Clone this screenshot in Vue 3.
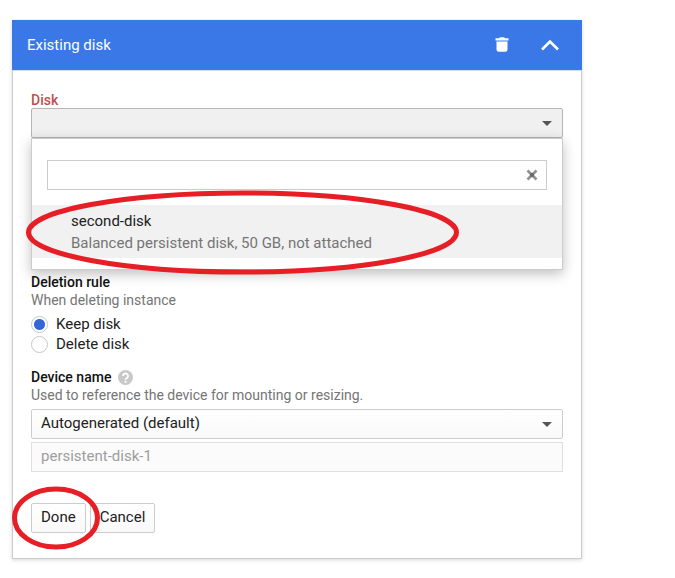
<script setup>
import { ref } from 'vue'

const disk = ref('')
const query = ref('')
const rule = ref('keep')
const naming = ref('auto')
const customName = ref('persistent-disk-1')

const disks = [
  { name: 'second-disk', detail: 'Balanced persistent disk, 50 GB, not attached' },
]
const rules = [
  { value: 'keep', label: 'Keep disk' },
  { value: 'delete', label: 'Delete disk' },
]
</script>

<template>
  <main class="page">
    <form class="card" @submit.prevent>
      <header class="head">
        <h1 class="title">Existing disk</h1>
        <button class="icon-btn" type="button" aria-label="Remove disk">
          <svg width="14" height="16" viewBox="0 0 14 16" fill="#fff">
            <path d="M0.5 1.2h3.500l0.900-1h4.200l0.900 1h3.500v2.300h-13z" />
            <path d="M1.500 4.500h11v8a2.200 2.200 0 0 1-2.200 2.200h-6.600a2.200 2.200 0 0 1-2.200-2.200z" />
          </svg>
        </button>
        <button class="icon-btn" type="button" aria-label="Collapse">
          <svg width="20" height="14" viewBox="0 0 20 14" fill="none" stroke="#fff" stroke-width="2.5">
            <path d="M2 11.5L10 3.500L18 11.500" />
          </svg>
        </button>
      </header>

      <div class="body">
        <section class="field disk-field">
          <label class="label error" for="disk">Disk</label>
          <div class="select-wrap">
            <select id="disk" v-model="disk" class="control open">
              <option value=""></option>
              <option v-for="d in disks" :key="d.name" :value="d.name">{{ d.name }}</option>
            </select>
            <svg class="caret" width="10" height="5" viewBox="0 0 10 5"><path d="M0 0h10L5 5z" fill="#555" /></svg>
            <div class="menu">
              <div class="search">
                <input v-model="query" class="search-input" type="text" aria-label="Filter disks" />
                <button class="clear" type="button" aria-label="Clear filter" @click="query = ''">
                  <svg width="12" height="12" viewBox="0 0 12 12" fill="none" stroke-width="2.800">
                    <path d="M1.500 1.500l9 9M10.500 1.500l-9 9" stroke="#919191" />
                    <path d="M4.500 4.500l3 3M7.500 4.500l-3 3" stroke="#666" stroke-width="2" />
                  </svg>
                </button>
              </div>
              <ul class="options" role="listbox" aria-label="Disks">
                <li v-for="d in disks" :key="d.name" class="option" role="option" aria-selected="false">
                  <span class="option-name">{{ d.name }}</span>
                  <span class="option-detail">{{ d.detail }}</span>
                  <svg class="ring ring-option" width="434" height="86" viewBox="0 0 434 86" aria-hidden="true">
                    <ellipse cx="217.500" cy="43.500" rx="214" ry="39.500" />
                  </svg>
                </li>
              </ul>
            </div>
          </div>
        </section>

        <fieldset class="field rule-field">
          <legend class="label">Deletion rule</legend>
          <p class="hint">When deleting instance</p>
          <div class="radios">
            <label v-for="r in rules" :key="r.value" class="radio">
              <input v-model="rule" class="radio-input" type="radio" name="rule" :value="r.value" />
              {{ r.label }}
            </label>
          </div>
        </fieldset>

        <section class="field">
          <div class="label-row">
            <label class="label" for="naming">Device name</label>
            <button class="help" type="button" aria-label="Help">
              <svg width="15" height="15" viewBox="0 0 15 15">
                <circle cx="7.500" cy="7.500" r="7.500" fill="#c8c8c8" />
                <path d="M5 6a2.500 2.500 0 1 1 4 2C8 8.600 7.500 8.900 7.500 9.800" fill="none" stroke="#fff" stroke-width="1.800" />
                <path d="M6.500 10.800h2v1.900h-2z" fill="#fff" />
              </svg>
            </button>
          </div>
          <p class="hint">Used to reference the device for mounting or resizing.</p>
          <div class="inputs">
            <div class="select-wrap">
              <select id="naming" v-model="naming" class="control">
                <option value="auto">Autogenerated (default)</option>
                <option value="custom">Custom</option>
              </select>
              <svg class="caret" width="10" height="5" viewBox="0 0 10 5"><path d="M0 0h10L5 5z" fill="#555" /></svg>
            </div>
            <input v-model="customName" class="control disabled" type="text" aria-label="Custom device name" disabled />
          </div>
        </section>

        <footer class="actions">
          <button class="btn" type="submit">
            Done
            <svg class="ring ring-done" width="88" height="64" viewBox="0 0 88 64" aria-hidden="true">
              <ellipse cx="44" cy="32" rx="41.500" ry="29" />
            </svg>
          </button>
          <button class="btn" type="button">Cancel</button>
        </footer>
      </div>
    </form>
  </main>
</template>

<style>
body {
  background: #fff;
}
</style>

<style scoped>
.page {
  padding: 20px 93px 19px 12px;
  font: 14px/18px Roboto, sans-serif;
  color: #212121;
}
.page * {
  box-sizing: border-box;
}
button,
input,
select {
  margin: 0;
  font: inherit;
  color: inherit;
}
.card {
  border: 1px solid #ccc;
  border-top: 0;
  box-shadow: 0 1px 4px rgba(0, 0, 0, 0.16);
}
.head {
  display: flex;
  align-items: center;
  gap: 16px;
  height: 50px;
  margin: 0 -1px;
  padding: 0 16px 0 15px;
  background: #3b78e7;
  color: #fff;
}
.title {
  flex: 1;
  margin: 0;
  font-size: 15px;
  font-weight: 400;
}
.icon-btn {
  display: flex;
  align-items: center;
  justify-content: center;
  width: 32px;
  height: 32px;
  padding: 0;
  border: 0;
  background: none;
}
.body {
  display: flex;
  flex-direction: column;
  padding: 21px 18px 25px;
  border-top: 1px solid #d5dcea;
}
.field {
  min-width: 0;
  margin: 0;
  padding: 0;
  border: 0;
}
.disk-field {
  margin-bottom: 135px;
}
.rule-field {
  margin-bottom: 14px;
}
.label {
  display: block;
  padding: 0;
  font-weight: 500;
  line-height: 18px;
  color: #111;
}
.disk-field .label {
  line-height: 16px;
}
.label.error {
  color: #c0504d;
}
.label-row {
  display: flex;
  align-items: center;
  gap: 7px;
}
.help {
  display: flex;
  padding: 0;
  border: 0;
  background: none;
}
.hint {
  margin: 0;
  color: #757575;
}
.select-wrap {
  position: relative;
}
.control {
  display: block;
  width: 100%;
  height: 30px;
  padding: 0 9px 2px;
  appearance: none;
  border: 1px solid #ccc;
  border-radius: 2px;
  background: linear-gradient(#fff, #f9f9f9);
  font-size: 15px;
}
.control.open {
  border-color: #b5b5b5;
  background: #f0f0f0;
}
.control.disabled {
  border-color: #e0e0e0;
  border-radius: 0;
  background: #fbfbfb;
  color: #9e9e9e;
}
.caret {
  position: absolute;
  right: 11px;
  top: 13px;
  pointer-events: none;
}
.menu {
  position: absolute;
  z-index: 1;
  top: 100%;
  left: 0;
  right: 0;
  padding: 21px 0 11px;
  border: 1px solid #ccc;
  background: #fff;
  box-shadow: 0 4px 12px rgba(0, 0, 0, 0.25);
}
.search {
  display: flex;
  align-items: center;
  height: 30px;
  margin: 0 15px 15px;
  padding-right: 8px;
  border: 1px solid #ccc;
}
.search-input {
  flex: 1;
  min-width: 0;
  padding: 0 8px;
  border: 0;
  outline: 0;
  background: none;
}
.clear {
  display: flex;
  padding: 0;
  border: 0;
  background: none;
}
.options {
  margin: 0;
  padding: 0;
  list-style: none;
}
.option {
  position: relative;
  display: flex;
  flex-direction: column;
  padding: 5px 39px 4px;
  background: #f1f1f1;
  font-size: 15px;
  line-height: 22px;
}
.option-detail {
  color: #757575;
}
.ring {
  position: absolute;
  pointer-events: none;
  fill: none;
  stroke: #e61e25;
  stroke-width: 5px;
}
.ring-option {
  left: -7px;
  top: -16px;
}
.ring-done {
  z-index: 2;
  left: -20px;
  top: -18px;
}
.radios {
  display: flex;
  flex-direction: column;
  padding-top: 5px;
}
.radio {
  display: flex;
  align-items: center;
  gap: 8px;
  font-size: 15px;
  line-height: 20px;
}
.radio-input {
  width: 17px;
  height: 17px;
  appearance: none;
  border: 1px solid #c6c6c6;
  border-radius: 50%;
  background: #fff;
}
.radio-input:checked {
  background: radial-gradient(circle, #3367d6 5px, #fff 6px);
}
.inputs {
  display: flex;
  flex-direction: column;
  gap: 3px;
  padding-top: 5px;
}
.actions {
  display: flex;
  gap: 4px;
  padding-top: 31px;
}
.btn {
  position: relative;
  height: 30px;
  padding: 0 9px 2px;
  border: 1px solid #ccc;
  border-radius: 2px;
  background: linear-gradient(#fff, #f9f9f9);
  font-size: 15px;
}
</style>
